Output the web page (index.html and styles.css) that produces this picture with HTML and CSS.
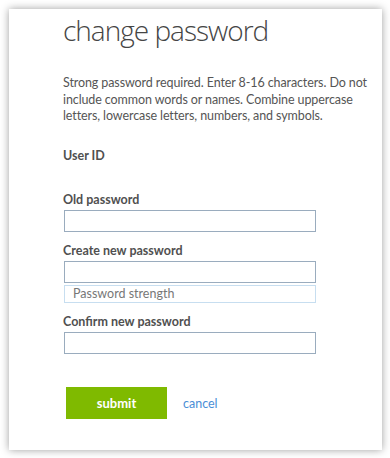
FILE: index.html
```html
<!DOCTYPE html>
<html>
<head>
<meta charset="utf-8">
<link rel="stylesheet" href="styles.css">
</head>
<body>
<div class="card">
  <h1 class="title">change password</h1>
  <p class="desc">Strong password required. Enter 8-16 characters. Do not include common words or names. Combine uppercase letters, lowercase letters, numbers, and symbols.</p>
  <div class="label userid">User ID</div>
  <div class="field">
    <div class="label">Old password</div>
    <input class="input" type="password">
  </div>
  <div class="field">
    <div class="label">Create new password</div>
    <input class="input" type="password">
    <div class="strength">Password strength</div>
  </div>
  <div class="field">
    <div class="label">Confirm new password</div>
    <input class="input" type="password">
  </div>
  <div class="actions">
    <button class="submit" type="button">submit</button>
    <a class="cancel" href="#">cancel</a>
  </div>
</div>
</body>
</html>
```
FILE: styles.css
```css
html, body {
  margin: 0;
  padding: 0;
  background: #ffffff;
}
body {
  font-family: Lato, "Liberation Sans", sans-serif;
  padding: 9px;
}
.card {
  box-sizing: border-box;
  width: 373px;
  height: 441px;
  background: #ffffff;
  box-shadow: 0 0 8px rgba(0, 0, 0, 0.38);
  padding: 3px 0 0 54px;
}
.title {
  margin: 0;
  font-family: "Open Sans", sans-serif;
  font-weight: 300;
  font-size: 28px;
  letter-spacing: -1px;
  line-height: 36px;
  color: #454545;
}
.desc {
  margin: 27px 0 0 0;
  width: 312px;
  font-size: 12.5px;
  letter-spacing: -0.1px;
  line-height: 16.5px;
  color: #555555;
}
.label {
  font-size: 12.5px;
  font-weight: 700;
  color: #505050;
  line-height: 16px;
}
.userid {
  margin-top: 23.5px;
}
.field {
  margin-top: 28px;
}
.field + .field {
  margin-top: 11px;
}
.input {
  display: block;
  box-sizing: border-box;
  width: 252px;
  height: 22px;
  margin: 2px 0 0 1px;
  border: 1px solid #9aacbe;
  padding: 0 4px;
  background: #fff;
  outline: none;
}
.strength {
  box-sizing: border-box;
  width: 252px;
  height: 18px;
  margin: 2px 0 0 1px;
  border: 1px solid #c7def0;
  padding-left: 8px;
  font-size: 12.5px;
  line-height: 16px;
  color: #777777;
}
.actions {
  display: flex;
  align-items: center;
  margin-top: 33px;
  margin-left: 3px;
}
.submit {
  width: 101px;
  height: 32px;
  border: none;
  background: #7fba00;
  color: #ffffff;
  font-family: Lato, sans-serif;
  font-size: 13px;
  font-weight: 700;
  padding: 0;
}
.cancel {
  margin-left: 16px;
  font-size: 12.5px;
  color: #4a8ed6;
  text-decoration: none;
}
```
